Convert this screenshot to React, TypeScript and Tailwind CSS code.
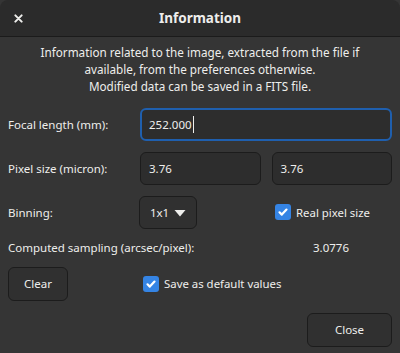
import { useState } from "react";

function CheckBox({ checked, label, onToggle }: { checked: boolean; label: string; onToggle: () => void }) {
  return (
    <button onClick={onToggle} className="flex items-center gap-[5px] text-[11.4px] text-[#eeeeec]">
      <span
        className={`flex h-[16px] w-[16px] items-center justify-center rounded-[3px] ${
          checked ? "bg-[#3584e4]" : "border border-[#1c1c1c] bg-[#2d2d2d]"
        }`}
      >
        {checked && (
          <svg className="h-[12px] w-[12px]" viewBox="0 0 12 12" fill="none" stroke="white" strokeWidth={2.2} strokeLinecap="round" strokeLinejoin="round">
            <path d="M2.5 6.3l2.3 2.3 4.7-5" />
          </svg>
        )}
      </span>
      {label}
    </button>
  );
}

export default function App() {
  const [realPixel, setRealPixel] = useState(true);
  const [saveDefault, setSaveDefault] = useState(true);

  return (
    <div className="h-[353px] w-[400px] overflow-hidden bg-[#353535] text-[11.5px] text-[#eeeeec]" style={{ fontFamily: "'Noto Sans', 'DejaVu Sans', sans-serif" }}>
      {/* Header bar */}
      <div className="relative flex h-[37px] items-center justify-center rounded-t-[8px] border-b border-[#1b1b1b] bg-[#2b2b2b]">
        <button className="absolute left-[9px] top-[9px] flex h-[18px] w-[18px] items-center justify-center text-[#eeeeec]">
          <svg className="h-[9px] w-[9px]" viewBox="0 0 10 10" stroke="currentColor" strokeWidth={2.2} strokeLinecap="round">
            <path d="M1.5 1.5l7 7M8.5 1.5l-7 7" />
          </svg>
        </button>
        <h1 className="text-[13.5px] font-bold">Information</h1>
      </div>

      {/* Description */}
      <p className="mt-[7px] px-[8px] text-center text-[11.7px] leading-[17px]">
        Information related to the image, extracted from the file if
        <br />
        available, from the preferences otherwise.
        <br />
        Modified data can be saved in a FITS file.
      </p>

      <div className="px-[8px]">
        {/* Focal length */}
        <div className="mt-[13px] flex h-[33px] items-center">
          <span className="w-[132px]">Focal length (mm):</span>
          <div className="flex h-[33px] flex-1 items-center rounded-[6px] border-2 border-[#1f5fae] bg-[#2d2d2d] px-[7px]">
            252.000<span className="ml-[1px] h-[17px] w-[1px] bg-[#eeeeec]" />
          </div>
        </div>

        {/* Pixel size */}
        <div className="mt-[11px] flex h-[33px] items-center">
          <span className="w-[132px]">Pixel size (micron):</span>
          <div className="flex flex-1 gap-[11px]">
            <div className="flex h-[33px] flex-1 items-center rounded-[6px] border border-[#1c1c1c] bg-[#2d2d2d] px-[8px]">3.76</div>
            <div className="flex h-[33px] flex-1 items-center rounded-[6px] border border-[#1c1c1c] bg-[#2d2d2d] px-[8px]">3.76</div>
          </div>
        </div>

        {/* Binning */}
        <div className="mt-[11px] flex h-[33px] items-center">
          <span className="w-[131px]">Binning:</span>
          <button className="flex h-[33px] w-[58px] items-center justify-center gap-[5px] rounded-[6px] border border-[#1c1c1c] bg-[#303030]">
            1x1
            <svg className="h-[8px] w-[12px]" viewBox="0 0 12 8" fill="currentColor">
              <path d="M0.5 1h11L6 7.5z" />
            </svg>
          </button>
          <div className="ml-[78px]">
            <CheckBox checked={realPixel} label="Real pixel size" onToggle={() => setRealPixel(!realPixel)} />
          </div>
        </div>

        {/* Computed sampling */}
        <div className="mt-[9px] flex h-[20px] items-center">
          <span className="w-[305px]">Computed sampling (arcsec/pixel):</span>
          <span>3.0776</span>
        </div>

        {/* Clear / save */}
        <div className="mt-[9px] flex h-[34px] items-center">
          <button className="h-[34px] w-[60px] rounded-[6px] border border-[#1c1c1c] bg-[#303030]">Clear</button>
          <div className="ml-[75px]">
            <CheckBox checked={saveDefault} label="Save as default values" onToggle={() => setSaveDefault(!saveDefault)} />
          </div>
        </div>

        {/* Close */}
        <div className="mt-[12px] flex justify-end">
          <button className="h-[34px] w-[85px] rounded-[6px] border border-[#1c1c1c] bg-[#303030]">Close</button>
        </div>
      </div>
    </div>
  );
}
